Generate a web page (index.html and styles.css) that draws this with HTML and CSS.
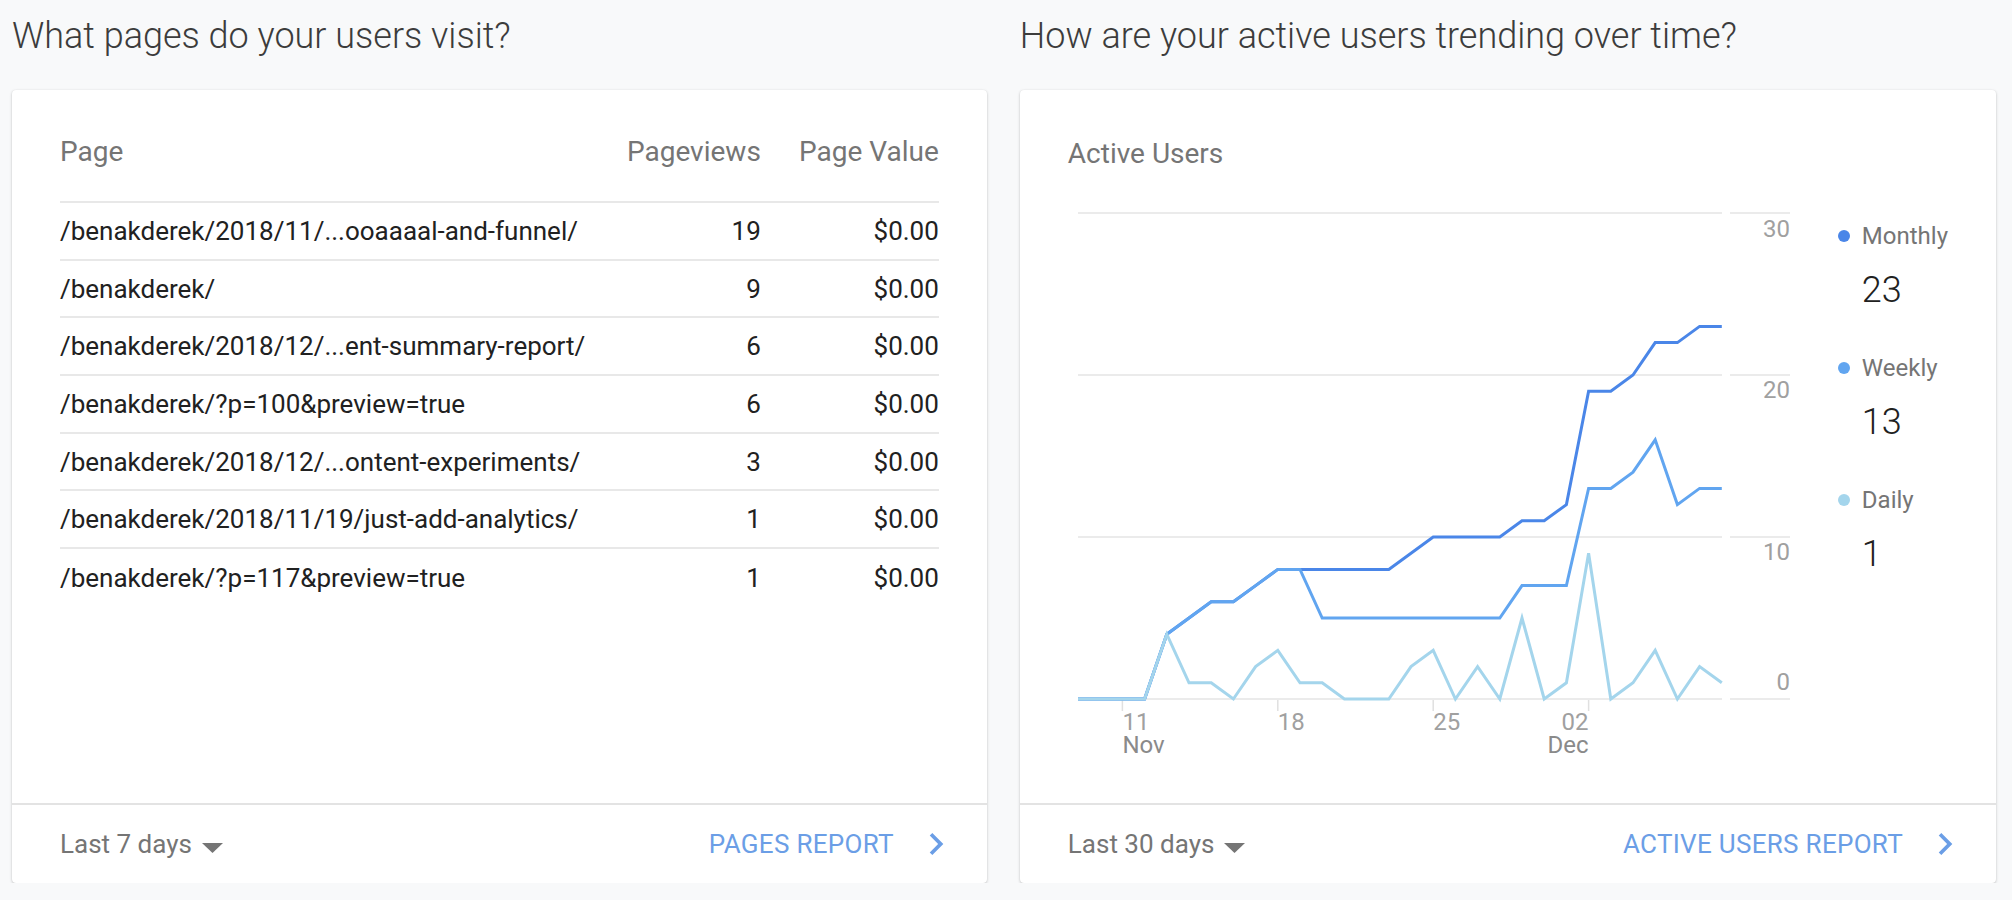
FILE: index.html
```html
<!DOCTYPE html>
<html lang="en">
<head>
<meta charset="utf-8">
<title>Analytics home</title>
<link rel="stylesheet" href="styles.css">
</head>
<body>
<div class="page">
  <section class="col">
    <h2 class="col-title">What pages do your users visit?</h2>
    <div class="card">
      <div class="card-body">
        <div class="tbl">
          <div class="tr th">
            <div class="c-page">Page</div>
            <div class="c-views">Pageviews</div>
            <div class="c-value">Page Value</div>
          </div>
          <div class="tr">
            <div class="c-page">/benakderek/2018/11/...ooaaaal-and-funnel/</div>
            <div class="c-views">19</div>
            <div class="c-value">$0.00</div>
          </div>
          <div class="tr">
            <div class="c-page">/benakderek/</div>
            <div class="c-views">9</div>
            <div class="c-value">$0.00</div>
          </div>
          <div class="tr">
            <div class="c-page">/benakderek/2018/12/...ent-summary-report/</div>
            <div class="c-views">6</div>
            <div class="c-value">$0.00</div>
          </div>
          <div class="tr">
            <div class="c-page">/benakderek/?p=100&amp;preview=true</div>
            <div class="c-views">6</div>
            <div class="c-value">$0.00</div>
          </div>
          <div class="tr">
            <div class="c-page">/benakderek/2018/12/...ontent-experiments/</div>
            <div class="c-views">3</div>
            <div class="c-value">$0.00</div>
          </div>
          <div class="tr">
            <div class="c-page">/benakderek/2018/11/19/just-add-analytics/</div>
            <div class="c-views">1</div>
            <div class="c-value">$0.00</div>
          </div>
          <div class="tr last">
            <div class="c-page">/benakderek/?p=117&amp;preview=true</div>
            <div class="c-views">1</div>
            <div class="c-value">$0.00</div>
          </div>
        </div>
      </div>
      <div class="card-footer">
        <div class="range">Last 7 days
          <svg class="caret" viewBox="0 0 21 10" width="21" height="10"><path d="M0 0h21L10.5 10z" fill="#757575"/></svg>
        </div>
        <a class="report" href="#">PAGES REPORT
          <svg class="chev" viewBox="0 0 24 24" width="44" height="44"><path d="M10 6L8.59 7.41 13.17 12l-4.58 4.59L10 18l6-6z" fill="currentColor"/></svg>
        </a>
      </div>
    </div>
  </section>

  <section class="col">
    <h2 class="col-title">How are your active users trending over time?</h2>
    <div class="card">
      <div class="card-body chart-body">
        <div class="chart-col">
          <div class="chart-title">Active Users</div>
          <svg class="chart" viewBox="0 0 732 560" width="732" height="560">
            <g class="grid">
              <line x1="10" y1="13" x2="654" y2="13"/>
              <line x1="662" y1="13" x2="722" y2="13"/>
              <line x1="10" y1="175" x2="654" y2="175"/>
              <line x1="662" y1="175" x2="722" y2="175"/>
              <line x1="10" y1="337" x2="654" y2="337"/>
              <line x1="662" y1="337" x2="722" y2="337"/>
              <line x1="10" y1="499" x2="654" y2="499"/>
              <line x1="662" y1="499" x2="722" y2="499"/>
            </g>
            <g class="ticks">
              <line x1="54.4" y1="500" x2="54.4" y2="511"/>
              <line x1="209.8" y1="500" x2="209.8" y2="511"/>
              <line x1="365.2" y1="500" x2="365.2" y2="511"/>
              <line x1="520.6" y1="500" x2="520.6" y2="511"/>
            </g>
            <g class="ylab">
              <text x="722" y="37">30</text>
              <text x="722" y="198">20</text>
              <text x="722" y="360">10</text>
              <text x="722" y="490">0</text>
            </g>
            <g class="xlab">
              <text x="54.4" y="530">11<tspan class="mon" x="54.4" dy="23">Nov</tspan></text>
              <text x="209.8" y="530">18</text>
              <text x="365.2" y="530">25</text>
              <text class="end" x="520.6" y="530">02<tspan class="mon" x="520.6" dy="23">Dec</tspan></text>
            </g>
            <polyline class="ln monthly" points="10,499 32.2,499 54.4,499 76.6,499 98.8,434.2 121,418 143.2,401.8 165.4,401.8 187.6,385.6 209.8,369.4 232,369.4 254.2,369.4 276.4,369.4 298.6,369.4 320.8,369.4 343,353.2 365.2,337 387.4,337 409.6,337 431.8,337 454,320.8 476.2,320.8 498.4,304.6 520.6,191.2 542.8,191.2 565,175 587.2,142.6 609.4,142.6 631.6,126.4 653.8,126.4"/>
            <polyline class="ln weekly" points="10,499 32.2,499 54.4,499 76.6,499 98.8,434.2 121,418 143.2,401.8 165.4,401.8 187.6,385.6 209.8,369.4 232,369.4 254.2,418 276.4,418 298.6,418 320.8,418 343,418 365.2,418 387.4,418 409.6,418 431.8,418 454,385.6 476.2,385.6 498.4,385.6 520.6,288.4 542.8,288.4 565,272.2 587.2,239.8 609.4,304.6 631.6,288.4 653.8,288.4"/>
            <polyline class="ln daily" points="10,499 32.2,499 54.4,499 76.6,499 98.8,434.2 121,482.8 143.2,482.8 165.4,499 187.6,466.6 209.8,450.4 232,482.8 254.2,482.8 276.4,499 298.6,499 320.8,499 343,466.6 365.2,450.4 387.4,499 409.6,466.6 431.8,499 454,418 476.2,499 498.4,482.8 520.6,353.2 542.8,499 565,482.8 587.2,450.4 609.4,499 631.6,466.6 653.8,482.8"/>
          </svg>
        </div>
        <ul class="legend">
          <li class="lg-item">
            <div class="lg-label"><span class="dot d-monthly"></span>Monthly</div>
            <div class="lg-value">23</div>
          </li>
          <li class="lg-item">
            <div class="lg-label"><span class="dot d-weekly"></span>Weekly</div>
            <div class="lg-value">13</div>
          </li>
          <li class="lg-item">
            <div class="lg-label"><span class="dot d-daily"></span>Daily</div>
            <div class="lg-value">1</div>
          </li>
        </ul>
      </div>
      <div class="card-footer">
        <div class="range">Last 30 days
          <svg class="caret" viewBox="0 0 21 10" width="21" height="10"><path d="M0 0h21L10.5 10z" fill="#757575"/></svg>
        </div>
        <a class="report" href="#">ACTIVE USERS REPORT
          <svg class="chev" viewBox="0 0 24 24" width="44" height="44"><path d="M10 6L8.59 7.41 13.17 12l-4.58 4.59L10 18l6-6z" fill="currentColor"/></svg>
        </a>
      </div>
    </div>
  </section>
</div>
</body>
</html>
```
FILE: styles.css
```css
* { box-sizing: border-box; }

html, body {
  margin: 0;
  padding: 0;
  background: #f8f9fa;
  font-family: Roboto, "Liberation Sans", Arial, sans-serif;
  color: #212121;
}

.page {
  display: grid;
  grid-template-columns: 1fr 1fr;
  column-gap: 33px;
  padding: 0 16px 0 12px;
}

.col-title {
  margin: 0 0 36px;
  padding-top: 18px;
  font-size: 36px;
  line-height: 36px;
  font-weight: 300;
  color: #3c3c3c;
  white-space: nowrap;
}

.card {
  height: 793px;
  background: #fff;
  border-radius: 4px;
  box-shadow: 0 1px 3px rgba(0, 0, 0, 0.22), 0 0 1px rgba(0, 0, 0, 0.08);
  display: flex;
  flex-direction: column;
}

.card-body {
  flex: 1;
  padding: 48px 48px 0;
}

/* table */
.tr {
  display: flex;
  align-items: center;
  height: 57.7px;
  font-size: 26px;
  border-bottom: 2px solid #e8e8e8;
  white-space: nowrap;
}
.tr.last { border-bottom: none; }
.tr.th {
  height: 65px;
  align-items: flex-start;
  font-size: 28px;
  line-height: 28px;
  color: #757575;
}
.c-page { flex: 1; }
.c-views { width: 160px; text-align: right; }
.c-value { width: 178px; text-align: right; }

/* footer */
.card-footer {
  height: 80px;
  border-top: 2px solid #e3e3e3;
  display: flex;
  align-items: center;
  justify-content: space-between;
  padding: 0 44px 0 48px;
  font-size: 26px;
}
.range {
  color: #757575;
  display: flex;
  align-items: center;
}
.caret {
  margin-left: 10px;
  margin-top: 7px;
}
.report {
  color: #6b9ee6;
  text-decoration: none;
  letter-spacing: 0.3px;
  display: flex;
  align-items: center;
}
.chev {
  margin-left: 20px;
  margin-right: -15px;
}

/* chart card */
.chart-body {
  display: flex;
}
.chart-col {
  width: 732px;
  flex-shrink: 0;
}
.chart-title {
  margin-top: 2px;
  font-size: 28px;
  line-height: 28px;
  color: #757575;
}
.chart {
  display: block;
  margin-top: 32px;
  overflow: visible;
}
.grid line {
  stroke: #ebebeb;
  stroke-width: 2;
}
.ticks line {
  stroke: #e0e0e0;
  stroke-width: 1.5;
}
.ylab text {
  font-size: 24px;
  fill: #a0a0a0;
  text-anchor: end;
}
.xlab text {
  font-size: 24px;
  fill: #a0a0a0;
}
.xlab .mon { fill: #8a8a8a; }
.xlab .end { text-anchor: end; }
.ln {
  fill: none;
  stroke-width: 3;
  stroke-linejoin: miter;
}
.monthly { stroke: #4a86e8; }
.weekly { stroke: #61a5f0; }
.daily { stroke: #a4d5ec; }

.legend {
  list-style: none;
  margin: 83px 0 0 38px;
  padding: 0;
}
.lg-item {
  margin-bottom: 42px;
}
.lg-label {
  display: flex;
  align-items: center;
  font-size: 24px;
  line-height: 30px;
  color: #757575;
}
.dot {
  width: 12px;
  height: 12px;
  border-radius: 50%;
  margin-right: 12px;
}
.d-monthly { background: #4a86e8; }
.d-weekly { background: #61a5f0; }
.d-daily { background: #a4d5ec; }
.lg-value {
  margin-top: 18px;
  padding-left: 24px;
  font-size: 36px;
  line-height: 42px;
  font-weight: 300;
  color: #212121;
}
```
